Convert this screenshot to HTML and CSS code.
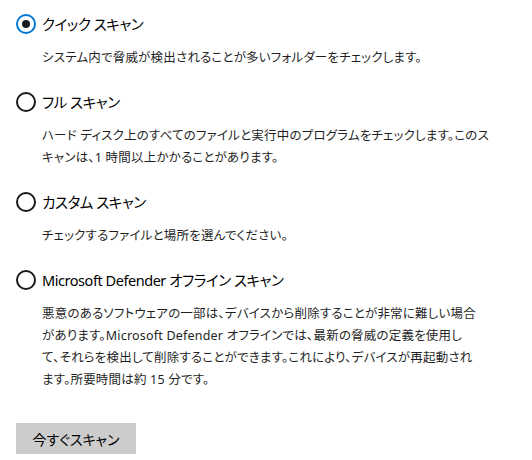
FILE: index.html
```html
<!DOCTYPE html>
<html lang="ja">
<head>
<meta charset="utf-8">
<link rel="stylesheet" href="styles.css">
</head>
<body>
<div class="options">
  <div class="option">
    <div class="row"><span class="radio checked"></span><span class="title">クイック スキャン</span></div>
    <p class="desc">システム内で脅威が検出されることが多いフォルダーをチェックします。</p>
  </div>
  <div class="option">
    <div class="row"><span class="radio"></span><span class="title">フル スキャン</span></div>
    <p class="desc">ハード ディスク上のすべてのファイルと実行中のプログラムをチェックします。このス<br>キャンは、1 時間以上かかることがあります。</p>
  </div>
  <div class="option">
    <div class="row"><span class="radio"></span><span class="title">カスタム スキャン</span></div>
    <p class="desc">チェックするファイルと場所を選んでください。</p>
  </div>
  <div class="option">
    <div class="row"><span class="radio"></span><span class="title">Microsoft Defender オフライン スキャン</span></div>
    <p class="desc">悪意のあるソフトウェアの一部は、デバイスから削除することが非常に難しい場合<br>があります。Microsoft Defender オフラインでは、最新の脅威の定義を使用し<br>て、それらを検出して削除することができます。これにより、デバイスが再起動され<br>ます。所要時間は約 15 分です。</p>
  </div>
</div>
<button class="scan-btn" type="button">今すぐスキャン</button>
</body>
</html>
```
FILE: styles.css
```css
html, body {
  margin: 0;
  padding: 0;
  background: #ffffff;
}
body {
  font-family: "Noto Sans", "Noto Sans CJK JP", sans-serif;
  color: #000;
  padding: 14px 0 0 16px;
  width: 532px;
  box-sizing: border-box;
}
.options {
  display: flex;
  flex-direction: column;
  gap: 23px;
}
.option {
  display: flex;
  flex-direction: column;
  gap: 13px;
}
.row {
  display: flex;
  align-items: center;
  gap: 6px;
  height: 20px;
}
.radio {
  width: 20px;
  height: 20px;
  box-sizing: border-box;
  border: 2px solid #1a1a1a;
  border-radius: 50%;
  flex: none;
  display: flex;
  align-items: center;
  justify-content: center;
}
.radio.checked {
  border-color: #0078d4;
}
.radio.checked::after {
  content: "";
  width: 8px;
  height: 8px;
  border-radius: 50%;
  background: #1a1a1a;
}
.title {
  font-size: 14.5px;
  line-height: 20px;
  letter-spacing: -0.45px;
  font-feature-settings: "palt" 1;
  white-space: nowrap;
}
.desc {
  margin: 0 0 0 26px;
  font-size: 12.5px;
  line-height: 22px;
  letter-spacing: 0.2px;
  color: #1f1f1f;
  font-feature-settings: "palt" 1;
  white-space: nowrap;
}
.scan-btn {
  margin-top: 32px;
  width: 120px;
  height: 31px;
  border: none;
  background: #cccccc;
  color: #000;
  font-family: "Noto Sans", "Noto Sans CJK JP", sans-serif;
  font-feature-settings: "palt" 1;
  font-size: 14px;
  padding: 0;
}
```
